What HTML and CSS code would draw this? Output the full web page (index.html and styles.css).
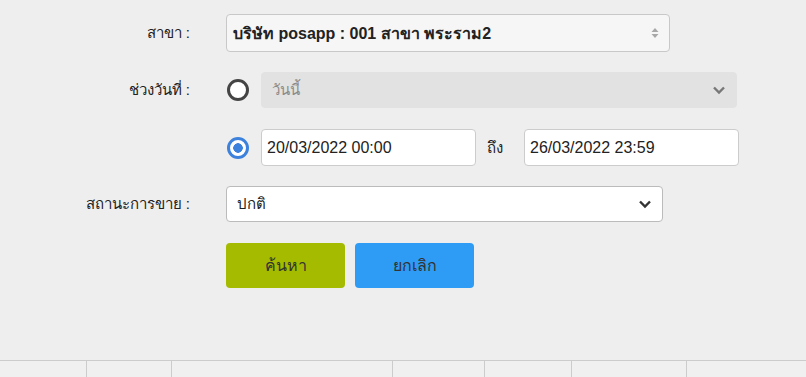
FILE: index.html
```html
<!DOCTYPE html>
<html>
<head>
	<meta charset="UTF-8">
	<title>รายงานการขาย</title>
	<link rel="stylesheet" href="styles.css">
</head>
<body>
	<div class="search-form">
		<div class="row row-branch">
			<label class="row-label">สาขา :</label>
			<div class="select select-branch">
				<span>บริษัท posapp : 001 สาขา พระราม2</span>
				<svg class="updown" width="8" height="12" viewBox="0 0 8 12">
					<path d="M4 1 L7.5 5 H0.5 Z M4 11 L7.5 7 H0.5 Z" fill="#a8a8a8"/>
				</svg>
			</div>
		</div>

		<div class="row row-range">
			<label class="row-label">ช่วงวันที่ :</label>
			<span class="radio"></span>
			<div class="select select-disabled">
				<span>วันนี้</span>
				<svg class="chevron" width="14" height="10" viewBox="0 0 14 10">
					<path d="M2 2.5 L7 7.5 L12 2.5" fill="none" stroke="#777" stroke-width="2.4"/>
				</svg>
			</div>
		</div>

		<div class="row row-dates">
			<span class="row-label"></span>
			<span class="radio radio-on"></span>
			<div class="input">20/03/2022 00:00</div>
			<span class="to">ถึง</span>
			<div class="input">26/03/2022 23:59</div>
		</div>

		<div class="row row-status">
			<label class="row-label">สถานะการขาย :</label>
			<div class="select select-status">
				<span>ปกติ</span>
				<svg class="chevron" width="14" height="10" viewBox="0 0 14 10">
					<path d="M2 2.5 L7 7.5 L12 2.5" fill="none" stroke="#333" stroke-width="2.4"/>
				</svg>
			</div>
		</div>

		<div class="row row-buttons">
			<span class="row-label"></span>
			<button class="btn btn-search">ค้นหา</button>
			<button class="btn btn-cancel">ยกเลิก</button>
		</div>
	</div>

	<div class="table-head">
		<div class="col c1"></div>
		<div class="col c2"></div>
		<div class="col c3"></div>
		<div class="col c4"></div>
		<div class="col c5"></div>
		<div class="col c6"></div>
		<div class="col c7"></div>
	</div>
</body>
</html>
```

FILE: styles.css
```css
body {
	margin: 0;
	background-color: #eeeeee;
	font-family: "Liberation Sans", Tahoma, sans-serif;
	color: #222;
	height: 377px;
	overflow: hidden;
}

.search-form {
	padding-top: 14px;
	height: 360px;
	box-sizing: border-box;
}

.row {
	display: flex;
	align-items: center;
}

.row-label {
	width: 190px;
	margin-right: 36px;
	text-align: right;
	font-size: 15px;
	flex-shrink: 0;
}

.select {
	display: flex;
	align-items: center;
	justify-content: space-between;
	box-sizing: border-box;
	border: 1px solid #c8c8c8;
	border-radius: 4px;
	background-color: #fff;
	padding: 0 10px 0 13px;
	font-size: 15px;
}

.select-branch {
	width: 444px;
	height: 38px;
	background-color: #f6f6f6;
	font-weight: bold;
	font-size: 16px;
	padding-left: 6px;
}

.row-range {
	margin-top: 20px;
}

.select-disabled {
	width: 476px;
	height: 36px;
	margin-left: 12px;
	background-color: #e2e2e2;
	border-color: #e2e2e2;
	color: #8a8a8a;
	padding-left: 10px;
}

.radio {
	width: 22px;
	height: 22px;
	box-sizing: border-box;
	border: 3px solid #444;
	border-radius: 50%;
	background-color: #fff;
	margin-left: 1px;
	flex-shrink: 0;
}

.radio-on {
	border-color: #3c82dc;
	background: radial-gradient(circle, #3c82dc 0, #3c82dc 4.5px, #fff 5px);
}

.row-dates {
	margin-top: 21px;
}

.input {
	box-sizing: border-box;
	width: 215px;
	height: 37px;
	margin-left: 12px;
	border: 1px solid #cccccc;
	border-radius: 4px;
	background-color: #fff;
	padding: 0 5px;
	line-height: 35px;
	font-size: 16px;
}

.to {
	width: 37px;
	margin-left: 11px;
	font-size: 15px;
}

.row-dates .to + .input {
	margin-left: 0;
}

.row-status {
	margin-top: 20px;
}

.select-status {
	width: 437px;
	height: 36px;
	border-color: #bbb;
	padding-left: 10px;
}

.row-buttons {
	margin-top: 21px;
}

.btn {
	width: 119px;
	height: 45px;
	border: none;
	border-radius: 4px;
	font-family: "Liberation Sans", Tahoma, sans-serif;
	font-size: 16px;
	color: #333;
	margin-right: 10px;
}

.btn-search {
	background-color: #a5bb00;
}

.btn-cancel {
	background-color: #2e9bf5;
}

.table-head {
	display: flex;
	height: 17px;
	border-top: 1px solid #cccccc;
	background-color: #f0f0f0;
}

.col {
	border-right: 1px solid #cccccc;
}

.c1 { width: 86px; }
.c2 { width: 84px; }
.c3 { width: 220px; }
.c4 { width: 91px; }
.c5 { width: 86px; }
.c6 { width: 114px; }
.c7 { flex: 1; border-right: none; }
```
